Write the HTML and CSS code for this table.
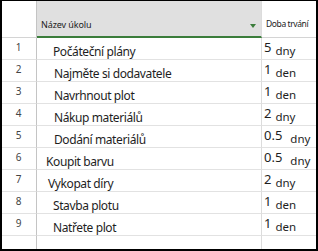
FILE: index.html
```html
<!DOCTYPE html>
<html lang="cs">
<head>
<meta charset="utf-8">
<link rel="stylesheet" href="styles.css">
</head>
<body>
<div class="sheet">
  <div class="row head">
    <div class="c num"></div>
    <div class="c name"><span class="htext">Název úkolu</span><span class="tri"></span></div>
    <div class="c dur"><span class="dtext">Doba trvání</span></div>
  </div>
  <div class="row"><div class="c num">1</div><div class="c name i2">Počáteční plány</div><div class="c dur"><span class="n">5</span><span class="u">dny</span></div></div>
  <div class="row"><div class="c num">2</div><div class="c name i2b">Najměte si dodavatele</div><div class="c dur"><span class="n">1</span><span class="u">den</span></div></div>
  <div class="row"><div class="c num">3</div><div class="c name i2b">Navrhnout plot</div><div class="c dur"><span class="n">1</span><span class="u">den</span></div></div>
  <div class="row"><div class="c num">4</div><div class="c name i2b">Nákup materiálů</div><div class="c dur"><span class="n">2</span><span class="u">dny</span></div></div>
  <div class="row"><div class="c num">5</div><div class="c name i2b">Dodání materiálů</div><div class="c dur"><span class="n">0.5</span><span class="u wide">dny</span></div></div>
  <div class="row"><div class="c num">6</div><div class="c name i1">Koupit barvu</div><div class="c dur"><span class="n">0.5</span><span class="u wide">dny</span></div></div>
  <div class="row"><div class="c num">7</div><div class="c name i1b">Vykopat díry</div><div class="c dur"><span class="n">2</span><span class="u">dny</span></div></div>
  <div class="row"><div class="c num">8</div><div class="c name i2">Stavba plotu</div><div class="c dur"><span class="n">1</span><span class="u">den</span></div></div>
  <div class="row"><div class="c num">9</div><div class="c name i2">Natřete plot</div><div class="c dur"><span class="n">1</span><span class="u">den</span></div></div>
  <div class="row filler"><div class="c num"></div><div class="c name"></div><div class="c dur"></div></div>
</div>
</body>
</html>
```
FILE: styles.css
```css
* { box-sizing: border-box; }
html, body { margin: 0; padding: 0; background: #fff; }
.sheet {
  width: 318px;
  height: 251px;
  border-top: 1px solid #000;
  border-left: 2px solid #000;
  border-right: 2px solid #000;
  border-bottom: 2px solid #000;
  display: flex;
  flex-direction: column;
  font-family: "Noto Sans", "DejaVu Sans", sans-serif;
  color: #1e1e1e;
  overflow: hidden;
}
.row {
  display: grid;
  grid-template-columns: 35px 225px 1fr;
  height: 22px;
  flex: none;
}
.c {
  border-bottom: 1px solid #e2e2e2;
  border-right: 1px solid #dcdcdc;
  overflow: hidden;
  white-space: nowrap;
}
.c.dur { border-right: none; }
.c.num {
  border-right-color: #c4c4c4;
  font-size: 10px;
  color: #444;
  text-align: center;
  padding-top: 2px;
  padding-right: 1px;
}
.c.name {
  font-size: 12px;
  letter-spacing: -0.4px;
  padding-top: 5px;
}
.i2 { padding-left: 16px; }
.i2b { padding-left: 17px; }
.i1 { padding-left: 9px; }
.i1b { padding-left: 11px; }
.c.dur {
  padding-left: 2px;
  padding-top: 1px;
  display: flex;
  align-items: flex-start;
}
.n { font-size: 13px; line-height: 16px; }
.u { font-size: 11.5px; margin-left: 4px; padding-top: 5px; line-height: 14px; }
.u.wide { margin-left: 8px; }
.head { height: 37px; }
.head .c { border-bottom: 1px solid #d4d4d4; }
.head .c.name {
  background: #e0e0e0;
  border-bottom: 2px solid #3b7d3b;
  display: flex;
  align-items: flex-end;
  justify-content: space-between;
  padding: 0 4px 5px 4px;
  letter-spacing: 0;
}
.htext { font-size: 9px; color: #222; letter-spacing: -0.1px; }
.tri {
  width: 0; height: 0;
  border-left: 3.5px solid transparent;
  border-right: 3.5px solid transparent;
  border-top: 4px solid #3b7d3b;
  margin-bottom: 3px;
  margin-right: 1px;
}
.head .c.dur {
  align-items: center;
  padding-left: 4px;
  padding-top: 8px;
}
.dtext { font-size: 8.5px; color: #222; letter-spacing: -0.4px; }
.filler { flex: 1; height: auto; }
.filler .c { border-bottom: none; }
```
